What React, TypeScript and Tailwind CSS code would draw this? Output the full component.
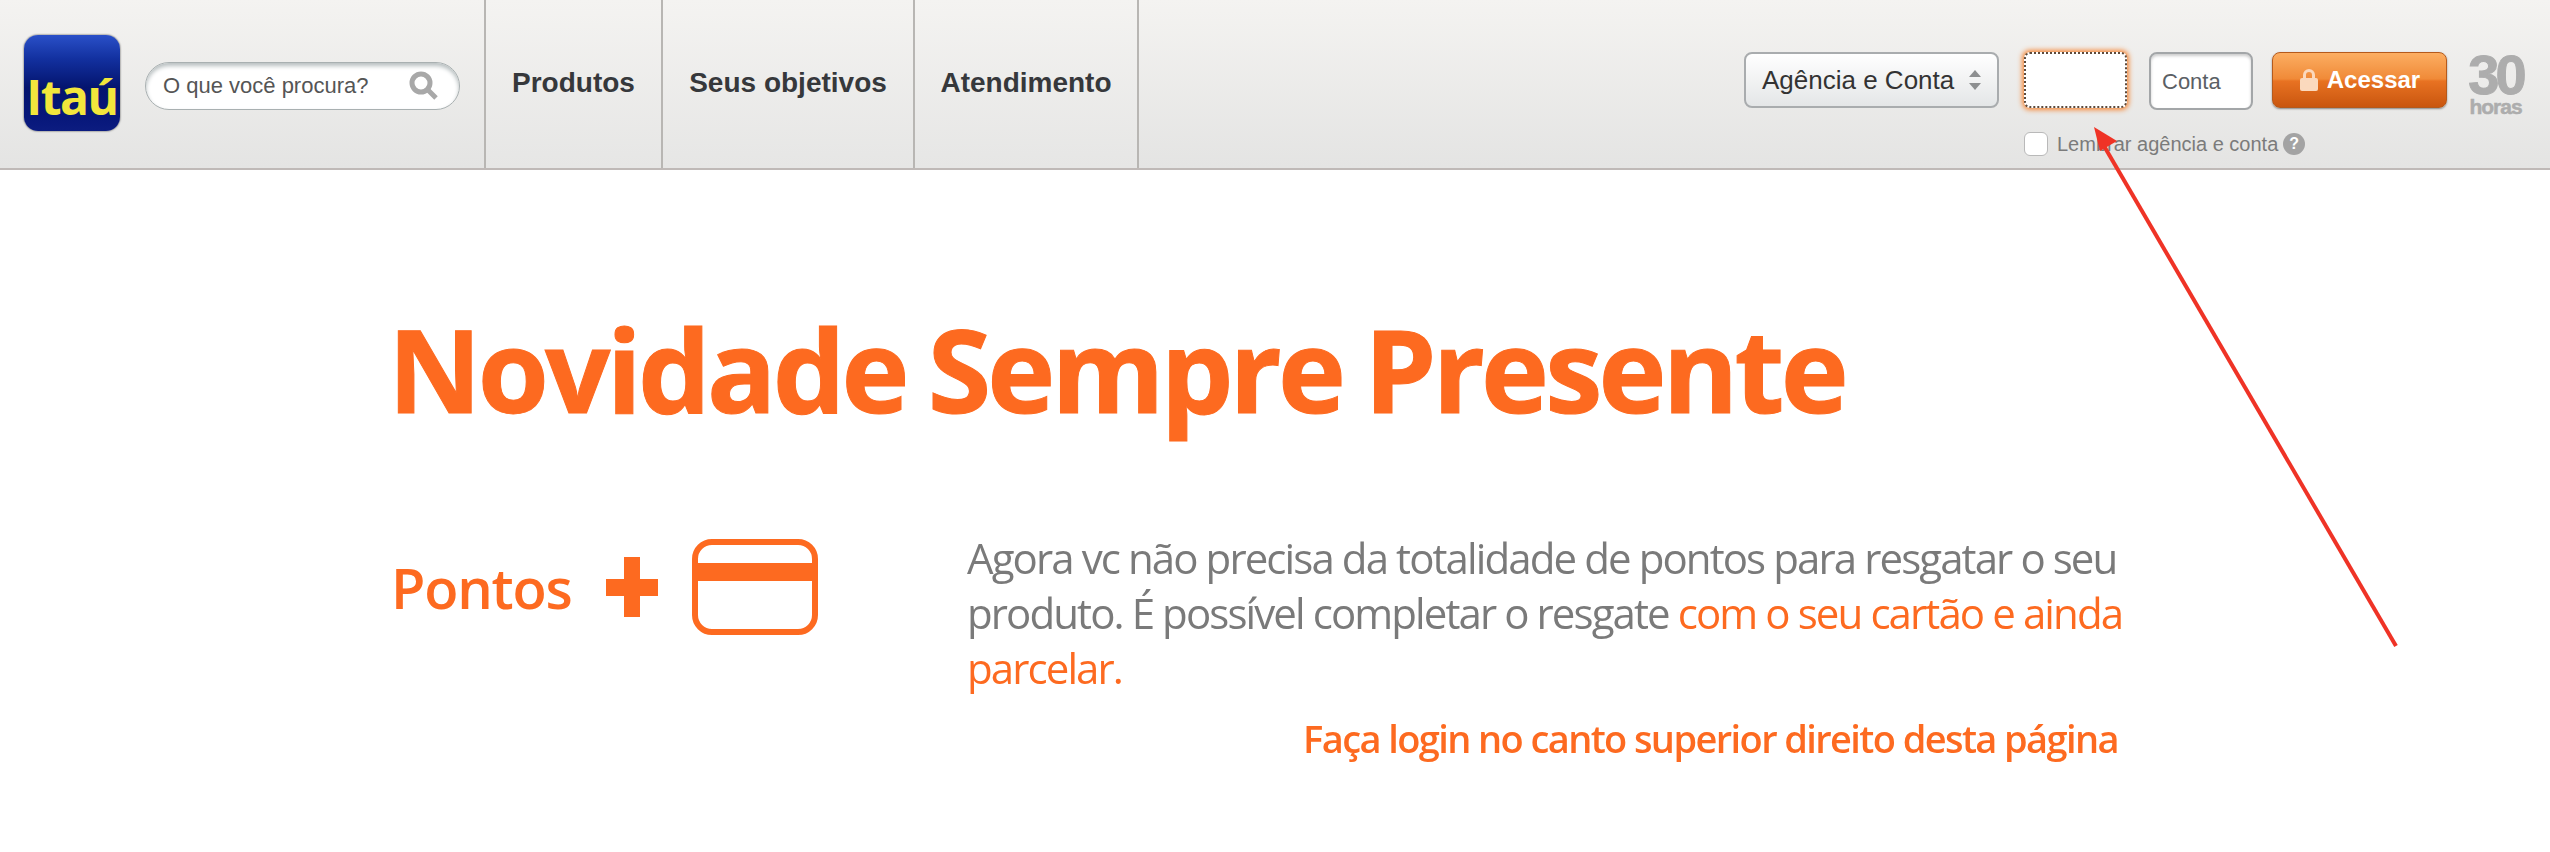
import React from "react";

const sans = "font-['Liberation_Sans',Arial,sans-serif]";
const body = "font-['Open_Sans','Noto_Sans',sans-serif]";

function NavItem({ label, w }: { label: string; w: string }) {
  return (
    <div className={`flex h-full items-center justify-center border-r-2 border-[#b8b6b3] bg-gradient-to-b from-[#f4f3f1] to-[#e6e6e5] pb-[2px] text-[28px] font-bold text-[#36383b] ${w}`}>
      {label}
    </div>
  );
}

function Card() {
  return (
    <svg width="126" height="96" viewBox="0 0 126 96" fill="none" className="shrink-0">
      <rect x="3" y="3" width="120" height="90" rx="17" stroke="#fd6a20" strokeWidth="6" />
      <rect x="3" y="24" width="120" height="18" fill="#fd6a20" />
    </svg>
  );
}

export default function App() {
  return (
    <div className={`relative h-[852px] w-[2550px] overflow-hidden bg-white ${sans}`}>
      <header className="flex h-[170px] items-stretch border-b-2 border-[#bfb9b7] bg-gradient-to-b from-[#f4f3f1] to-[#e4e4e3]">
        <div className="flex w-[484px] shrink-0 items-center pb-[2px] pl-[24px]">
          <div className="flex h-[96px] w-[96px] shrink-0 items-end justify-center rounded-[14px] bg-[linear-gradient(180deg,#2a50c8_0%,#12309f_25%,#04146e_55%,#07177a_85%,#0c1c80_100%)] pb-[6px] shadow-[0_0_2px_#333]">
            <span className={`text-[48px] font-bold leading-[56px] tracking-[-1.5px] text-[#f2e63c] ${body}`}>Itaú</span>
          </div>
          <div className="ml-[25px] mt-[5px] flex h-[48px] w-[315px] items-center justify-between rounded-full border border-[#a9b0b1] bg-white pl-[17px] pr-[20px] shadow-[inset_0_3px_4px_#b8bfc0]">
            <span className="text-[22px] text-[#555]">O que você procura?</span>
            <svg width="30" height="30" viewBox="0 0 30 30" fill="none">
              <circle cx="12" cy="12" r="9" stroke="#a8a8a8" strokeWidth="5" />
              <path d="M18 18l9 9" stroke="#a8a8a8" strokeWidth="5" />
            </svg>
          </div>
        </div>
        <nav className="flex h-full border-l-2 border-[#b8b6b3]">
          <NavItem label="Produtos" w="w-[177px]" />
          <NavItem label="Seus objetivos" w="w-[252px]" />
          <NavItem label="Atendimento" w="w-[224px]" />
        </nav>
        <div className="ml-auto flex items-start pr-[26px] pt-[52px]">
          <div className="flex h-[56px] w-[255px] items-center justify-between rounded-[8px] border-2 border-[#a9acae] bg-gradient-to-b from-white to-[#e4e6e7] pl-[16px] pr-[16px]">
            <span className="text-[26px] text-[#333]">Agência e Conta</span>
            <svg width="12" height="22" viewBox="0 0 12 22" fill="#8d8f90">
              <path d="M6 1l6 7H0z" />
              <path d="M6 21l6-7H0z" />
            </svg>
          </div>
          <div className="ml-[25px] flex flex-col">
            <div className="flex items-start">
              <div className="h-[56px] w-[103px] rounded-[6px] border-2 border-dotted border-[#5c4a3c] bg-white shadow-[0_0_5px_2px_#f58a3c]" />
              <div className="ml-[22px] flex h-[58px] w-[104px] items-center rounded-[8px] border-2 border-[#a3a6a8] bg-white pl-[11px] text-[22px] text-[#5b6065] shadow-[inset_0_2px_3px_#ccc]">
                Conta
              </div>
              <div className="ml-[19px] flex h-[56px] w-[175px] items-center justify-center gap-[8px] rounded-[8px] border border-[#b55a1c] bg-[linear-gradient(180deg,#fcae62_0%,#f08a38_48%,#e87222_52%,#c9560f_100%)] text-[24px] font-bold text-white shadow-[0_1px_2px_#888]">
                <svg width="20" height="24" viewBox="0 0 20 24" fill="#fbd9bd">
                  <path d="M4 11V7a6 6 0 0 1 12 0v4h-3V7a3 3 0 0 0-6 0v4z" />
                  <rect x="1" y="10" width="18" height="13" rx="2" />
                </svg>
                Acessar
              </div>
            </div>
            <div className="mt-[19px] flex items-center">
              <div className="h-[24px] w-[24px] rounded-[6px] border border-[#b9b9b9] bg-white" />
              <span className="ml-[9px] text-[20px] text-[#7b7b7b]">Lembrar agência e conta</span>
              <span className="ml-[5px] flex h-[22px] w-[22px] items-center justify-center rounded-full bg-[#a3a3a3] text-[16px] font-bold text-white">?</span>
            </div>
          </div>
          <div className="ml-[20px] flex w-[57px] flex-col items-center">
            <span className="text-[56px] font-bold leading-[46px] tracking-[-4px] text-[#adadad] [-webkit-text-stroke:1px_#adadad]">30</span>
            <span className="text-[21px] font-bold leading-[18px] tracking-[-1px] text-[#adadad] [-webkit-text-stroke:0.5px_#adadad]">horas</span>
          </div>
        </div>
      </header>

      <main className={`pl-[391px] blur-[0.6px] ${body}`}>
        <h1 className="-ml-[3px] mt-[134px] text-[115px] font-bold leading-[130px] tracking-[-3.8px] text-[#fd6a20] [word-spacing:-4px] [-webkit-text-stroke:1px_#fd6a20]">Novidade Sempre Presente</h1>
        <div className="mt-[96px] flex items-start">
          <div className="flex w-[576px] shrink-0 items-center pt-[9px]">
            <span className="text-[56px] font-semibold tracking-[-1.2px] text-[#fd6a20]">Pontos</span>
            <span className="ml-[34px] mr-[34px] text-[0px]">
              <svg width="52" height="60" viewBox="0 0 52 60" fill="#fd6a20" className="inline">
                <rect x="0" y="22" width="52" height="17" />
                <rect x="18" y="0" width="16" height="60" />
              </svg>
            </span>
            <Card />
          </div>
          <div className="w-[1170px] shrink-0 text-[42px] leading-[55px] tracking-[-1.9px] text-[#7a7a7a]">
            <p>
              Agora vc não precisa da totalidade de pontos para resgatar o seu produto. É possível completar o resgate{" "}
              <span className="text-[#fd6a20]">com o seu cartão e ainda parcelar.</span>
            </p>
            <p className="mr-[19px] mt-[16px] text-right text-[38px] font-semibold tracking-[-1.6px] text-[#fd6a20]">Faça login no canto superior direito desta página</p>
          </div>
        </div>
      </main>

      <svg className="absolute left-0 top-0" width="2550" height="852" viewBox="0 0 2550 852" fill="none">
        <path d="M2396 646L2104 146" stroke="#ef3326" strokeWidth="4" />
        <path d="M2094 127l23 14-17 10z" fill="#ef3326" />
      </svg>
    </div>
  );
}
